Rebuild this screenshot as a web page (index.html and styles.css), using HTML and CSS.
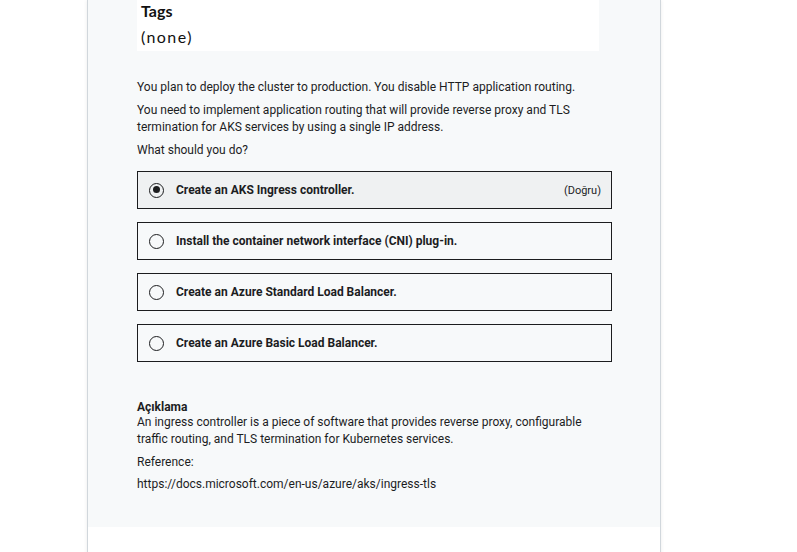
FILE: index.html
```html
<!DOCTYPE html>
<html>
<head>
<meta charset="utf-8">
<link rel="stylesheet" href="styles.css">
</head>
<body>
<div class="card">
  <div class="panel">
    <div class="figure">
      <div class="fig-title">Tags</div>
      <div class="fig-value">(none)</div>
    </div>
    <div class="question">
      <p>You plan to deploy the cluster to production. You disable HTTP application routing.</p>
      <p>You need to implement application routing that will provide reverse proxy and TLS termination for AKS services by using a single IP address.</p>
      <p>What should you do?</p>
    </div>
    <ul class="options">
      <li class="option selected"><span class="radio checked"></span><span class="opt-text">Create an AKS Ingress controller.</span><span class="tag">(Doğru)</span></li>
      <li class="option"><span class="radio"></span><span class="opt-text">Install the container network interface (CNI) plug-in.</span></li>
      <li class="option"><span class="radio"></span><span class="opt-text">Create an Azure Standard Load Balancer.</span></li>
      <li class="option"><span class="radio"></span><span class="opt-text">Create an Azure Basic Load Balancer.</span></li>
    </ul>
    <div class="explanation">
      <div class="exp-title">Açıklama</div>
      <p>An ingress controller is a piece of software that provides reverse proxy, configurable traffic routing, and TLS termination for Kubernetes services.</p>
      <p class="ref-label">Reference:</p>
      <p>https://docs.microsoft.com/en-us/azure/aks/ingress-tls</p>
    </div>
  </div>
  <div class="after"></div>
</div>
</body>
</html>
```
FILE: styles.css
```css
html, body {
  margin: 0;
  padding: 0;
  background: #ffffff;
}
body {
  font-family: Roboto, "Liberation Sans", sans-serif;
  color: #1c1d1f;
}
.card {
  margin-left: 87px;
  width: 572px;
  border: 1px solid #d1d7dc;
  border-top: none;
  box-shadow: 0 0 4px rgba(0,0,0,0.08);
  height: 560px;
}
.panel {
  background: #f7f9fa;
  padding: 0 48px 0 49px;
  height: 527px;
  box-sizing: border-box;
}
.figure {
  background: #ffffff;
  width: 462px;
  height: 51px;
  box-sizing: border-box;
  padding: 1px 4px;
  font-family: Lato, "Open Sans", sans-serif;
  color: #111;
}
.fig-title {
  font-weight: 700;
  font-size: 16px;
  line-height: 20px;
}
.fig-value {
  font-size: 16px;
  line-height: 26px;
  padding-top: 3px;
  letter-spacing: 1.4px;
}
.question {
  padding-top: 28px;
  font-size: 12px;
  line-height: 17px;
}
.question p, .explanation p {
  margin: 0 0 6px 0;
}
.explanation .ref-label {
  margin-bottom: 5px;
}
.options {
  list-style: none;
  margin: 12px 0 0 0;
  padding: 0;
  width: 475px;
  display: flex;
  flex-direction: column;
  gap: 13px;
}
.option {
  display: flex;
  align-items: center;
  height: 38px;
  box-sizing: border-box;
  border: 1px solid #1c1d1f;
  padding: 0 10px 0 11px;
  font-size: 12px;
  font-weight: 700;
}
.option.selected {
  background: #eff1f2;
}
.radio {
  width: 15px;
  height: 15px;
  box-sizing: border-box;
  border: 1.5px solid #1c1d1f;
  border-radius: 50%;
  margin-right: 12px;
  position: relative;
  flex: none;
}
.radio.checked::after {
  content: "";
  position: absolute;
  left: 2.5px;
  top: 2.5px;
  width: 7px;
  height: 7px;
  border-radius: 50%;
  background: #1c1d1f;
}
.opt-text {
  flex: 1;
}
.tag {
  font-size: 11px;
  font-weight: 400;
  color: #1c1d1f;
}
.explanation {
  margin-top: 38px;
  font-size: 12px;
  line-height: 17px;
}
.exp-title {
  font-weight: 700;
  line-height: 14px;
}
```
